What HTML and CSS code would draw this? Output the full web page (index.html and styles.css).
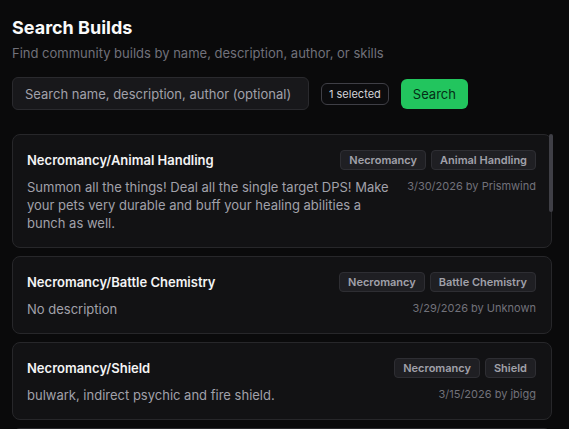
FILE: index.html
```html
<!DOCTYPE html>
<html lang="en">
<head>
<meta charset="utf-8">
<title>Search Builds</title>
<link rel="stylesheet" href="styles.css">
</head>
<body>
<main class="page">
  <header class="header">
    <h1 class="title">Search Builds</h1>
    <p class="subtitle">Find community builds by name, description, author, or skills</p>
  </header>
  <div class="search-row">
    <input class="search-input" type="text" placeholder="Search name, description, author (optional)">
    <span class="selected-pill">1 selected</span>
    <button class="search-btn" type="button">Search</button>
  </div>
  <section class="results">
    <div class="scroll-thumb"></div>
    <article class="card">
      <div class="card-top">
        <h2 class="card-title">Necromancy/Animal Handling</h2>
        <div class="tags"><span class="tag">Necromancy</span><span class="tag">Animal Handling</span></div>
      </div>
      <div class="card-bottom">
        <p class="desc">Summon all the things! Deal all the single target DPS! Make your pets very durable and buff your healing abilities a bunch as well.</p>
        <span class="meta">3/30/2026 by Prismwind</span>
      </div>
    </article>
    <article class="card">
      <div class="card-top">
        <h2 class="card-title">Necromancy/Battle Chemistry</h2>
        <div class="tags"><span class="tag">Necromancy</span><span class="tag">Battle Chemistry</span></div>
      </div>
      <div class="card-bottom">
        <p class="desc">No description</p>
        <span class="meta">3/29/2026 by Unknown</span>
      </div>
    </article>
    <article class="card">
      <div class="card-top">
        <h2 class="card-title">Necromancy/Shield</h2>
        <div class="tags"><span class="tag">Necromancy</span><span class="tag">Shield</span></div>
      </div>
      <div class="card-bottom">
        <p class="desc">bulwark, indirect psychic and fire shield.</p>
        <span class="meta">3/15/2026 by jbigg</span>
      </div>
    </article>
    <article class="card">
      <div class="card-top">
        <h2 class="card-title">Necromancy</h2>
        <div class="tags"><span class="tag">Necromancy</span></div>
      </div>
      <div class="card-bottom">
        <p class="desc">No description</p>
        <span class="meta">3/10/2026 by Unknown</span>
      </div>
    </article>
  </section>
</main>
</body>
</html>
```

FILE: styles.css
```css
* { box-sizing: border-box; }

html, body {
  margin: 0;
  height: 100%;
  overflow: hidden;
  background: #0a0a0b;
  font-family: Inter, "Liberation Sans", sans-serif;
  color: #f4f4f5;
}

.page {
  padding: 14px 17px 0 12px;
}

.title {
  margin: 0;
  font-size: 18px;
  line-height: 28px;
  font-weight: 700;
  color: #fafafa;
}

.subtitle {
  margin: 1px 0 0;
  font-size: 13px;
  line-height: 20px;
  color: #71717a;
}

.search-row {
  display: flex;
  align-items: center;
  gap: 12px;
  margin-top: 14px;
}

.search-input {
  width: 297px;
  height: 33px;
  padding: 0 12px;
  border: 1px solid #2a2a2e;
  border-radius: 6px;
  background: #18181b;
  font-family: inherit;
  font-size: 13px;
  color: #e4e4e7;
  outline: none;
}

.search-input::placeholder {
  color: #a1a1aa;
}

.selected-pill {
  display: inline-flex;
  align-items: center;
  height: 22px;
  padding: 0 7px;
  border: 1px solid #3f3f46;
  border-radius: 6px;
  background: #0c0c0e;
  font-size: 11px;
  color: #d4d4d8;
}

.search-btn {
  height: 30px;
  padding: 0 12px;
  border: none;
  border-radius: 6px;
  background: #22c55e;
  font-family: inherit;
  font-size: 13px;
  color: #052e16;
}

.results {
  position: relative;
  margin-top: 24px;
  display: flex;
  flex-direction: column;
  gap: 8px;
}

.scroll-thumb {
  position: absolute;
  top: 0;
  right: -1px;
  width: 4px;
  height: 78px;
  border-radius: 2px;
  background: #3f3f46;
  z-index: 2;
}

.card {
  padding: 15px 15px 15px 14px;
  border: 1px solid #27272a;
  border-radius: 8px;
  background: #121214;
}

.card-top {
  display: flex;
  align-items: center;
  justify-content: space-between;
  gap: 12px;
}

.card-title {
  margin: 0;
  font-size: 13px;
  line-height: 20px;
  font-weight: 600;
  color: #f4f4f5;
}

.tags {
  display: flex;
  gap: 5px;
}

.tag {
  display: inline-flex;
  align-items: center;
  height: 20px;
  padding: 0 8px;
  border: 1px solid #2e2e33;
  border-radius: 4px;
  background: #1f1f23;
  font-size: 11px;
  font-weight: 600;
  color: #a1a1aa;
}

.card-bottom {
  display: flex;
  align-items: flex-start;
  justify-content: space-between;
  gap: 16px;
  margin-top: 8px;
}

.desc {
  flex: 1;
  margin: 0;
  max-width: 365px;
  font-size: 13px;
  line-height: 18px;
  color: #a1a1aa;
}

.meta {
  flex-shrink: 0;
  font-size: 11px;
  line-height: 16px;
  color: #71717a;
}
```
